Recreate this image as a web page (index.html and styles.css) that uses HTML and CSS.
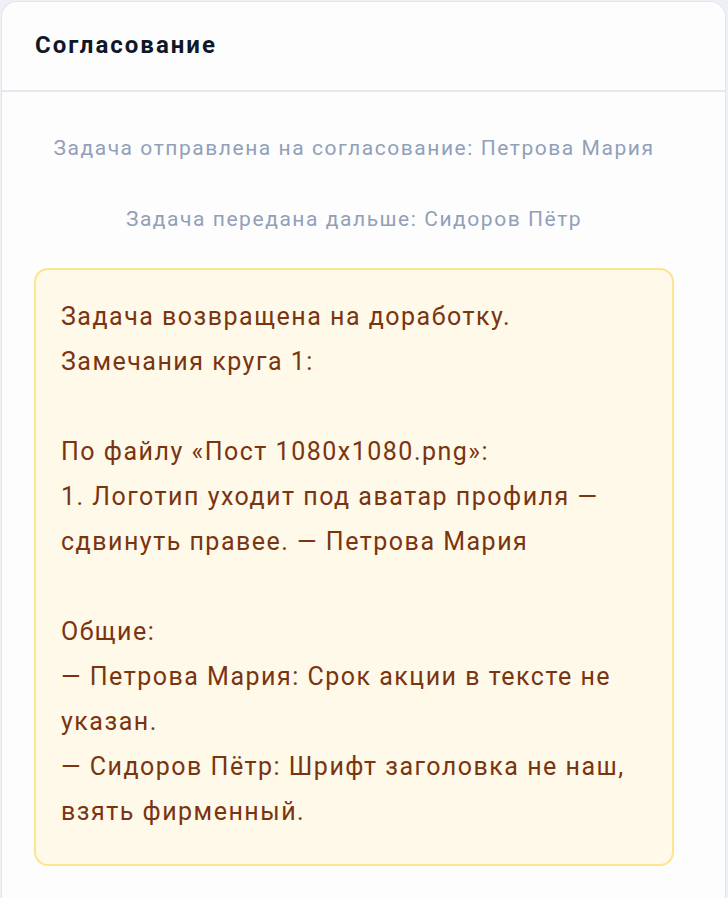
FILE: index.html
```html
<!DOCTYPE html>
<html lang="ru">
<head>
    <meta charset="UTF-8">
    <meta name="viewport" content="width=device-width, initial-scale=1.0">
    <title>Согласование</title>
    <link rel="stylesheet" href="styles.css">
</head>
<body>

<div class="card">
    <header class="card-header">
        <h2>Согласование</h2>
    </header>

    <div class="card-body">
        <p class="event">Задача отправлена на согласование: Петрова Мария</p>
        <p class="event">Задача передана дальше: Сидоров Пётр</p>

        <!-- Замечания по кругу согласования -->
        <div class="remarks">Задача возвращена на доработку.
Замечания круга 1:

По файлу «Пост 1080x1080.png»:
1. Логотип уходит под аватар профиля — сдвинуть правее. — Петрова Мария

Общие:
— Петрова Мария: Срок акции в тексте не указан.
— Сидоров Пётр: Шрифт заголовка не наш, взять фирменный.</div>
    </div>
</div>

</body>
</html>
```

FILE: styles.css
```css
body {
    font-family: Roboto, "Noto Sans", Arial, sans-serif;
    background-color: #eef0f5;
    margin: 0;
    padding: 1px 2px 0 1px;
}
.card {
    background-color: #fdfdfe;
    border: 1px solid #e3e6ee;
    border-bottom: none;
    border-radius: 16px 16px 0 0;
    min-height: 897px;
}
.card-header {
    padding: 0 33px 3px;
    height: 85px;
    display: flex;
    align-items: center;
    border-bottom: 2px solid #e5e8ef;
}
.card-header h2 {
    margin: 0;
    font-size: 24px;
    font-weight: 700;
    letter-spacing: 2px;
    color: #101828;
}
.card-body {
    padding: 41px 51px 0 32px;
}
.event {
    margin: 0 0 41px;
    text-align: center;
    font-size: 21px;
    line-height: 30px;
    letter-spacing: 1.55px;
    color: #91a0b8;
}
.event + .event {
    margin-bottom: 34px;
}
.remarks {
    background-color: #fef9e8;
    border: 2px solid #fce58f;
    border-radius: 14px;
    padding: 24px 25px 30px;
    white-space: pre-line;
    font-size: 25px;
    line-height: 45px;
    letter-spacing: 1.5px;
    color: #7a3410;
}
```
